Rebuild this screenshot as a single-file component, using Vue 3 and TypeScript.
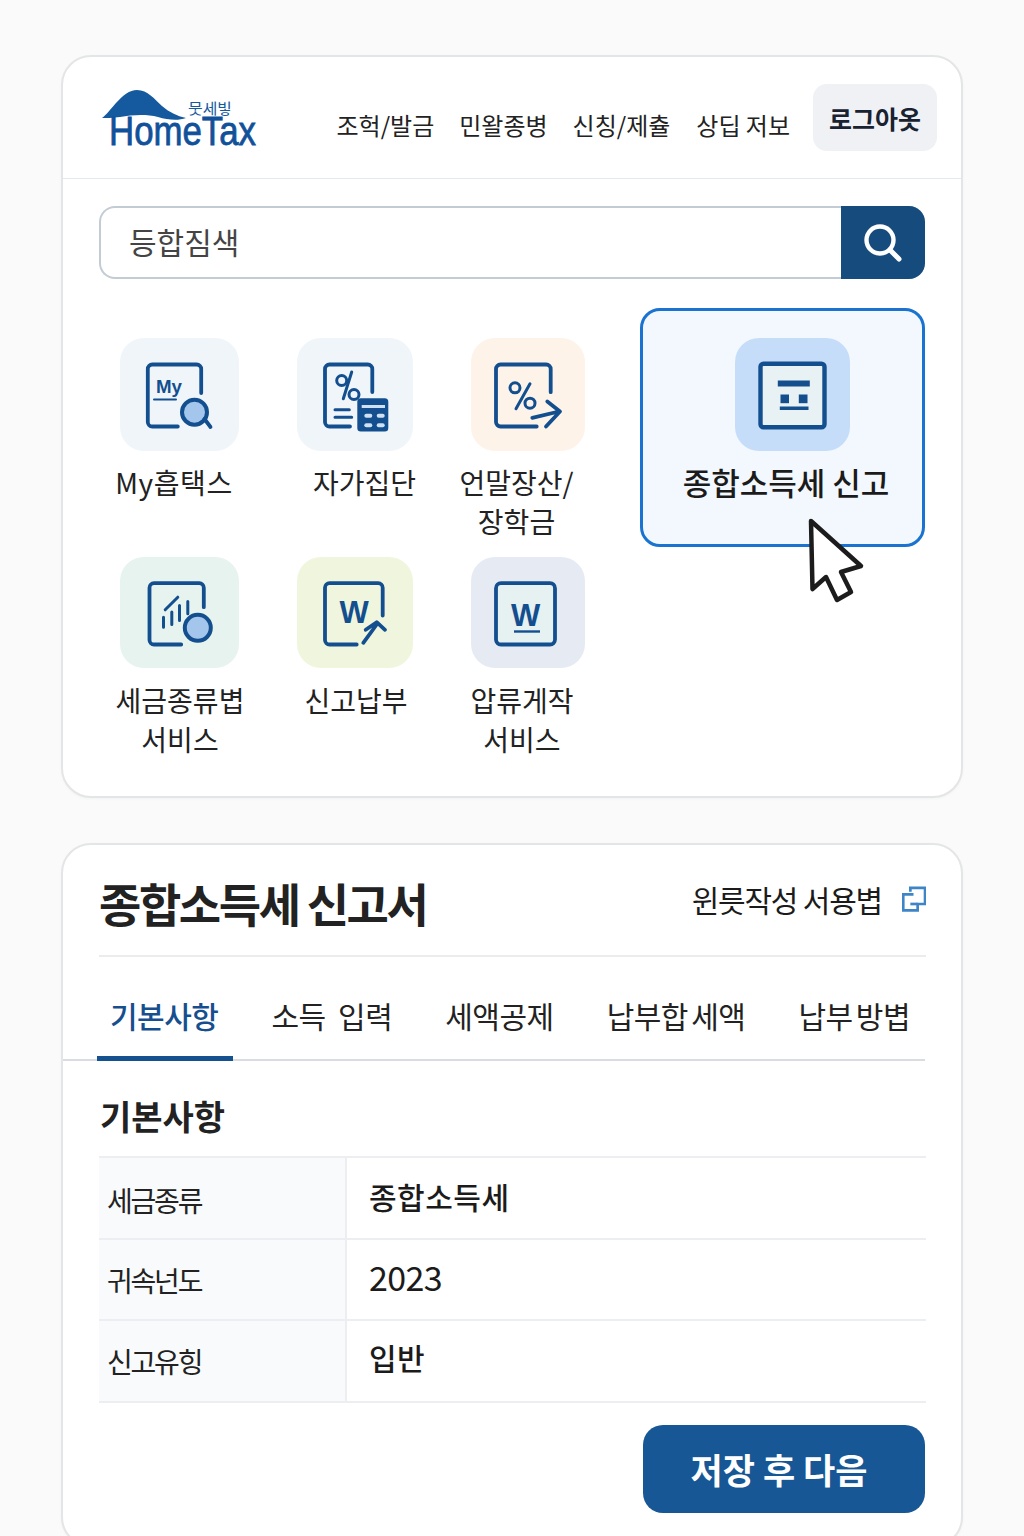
<template>
  <div class="page">
    <section class="card top-card">
      <header class="top-bar">
        <svg class="logo" viewBox="0 0 156 62" width="156" height="62" role="img" aria-label="HomeTax">
          <path d="M0 28 C9 22 20 0 35 0 C46 0 52 9 60 16 C67 22 75 26 84 28 C76 31 66 30 56 27 C44 24 30 25 18 27 C10 28 4 28 0 28 Z" fill="#155a9f" />
          <text x="86" y="24" font-size="15" textLength="44" lengthAdjust="spacingAndGlyphs" fill="#155a9f" class="logo-small">뭇세빟</text>
          <text x="7" y="55" font-size="40" textLength="147" lengthAdjust="spacingAndGlyphs" fill="#11519a" stroke="#11519a" stroke-width="0.8" class="logo-word">HomeTax</text>
        </svg>
        <nav class="top-nav">
          <a v-for="item in navItems" :key="item">{{ item }}</a>
        </nav>
        <button class="logout">로그아옷</button>
      </header>

      <div class="body">
        <div class="search">
          <div class="search-text">등합짐색</div>
          <div class="search-btn">
            <svg viewBox="0 0 40 40" width="40" height="40" fill="none" stroke="#fff">
              <circle cx="17" cy="17" r="13.5" stroke-width="4.4" />
              <path d="M27 27 L36 36" stroke-width="5" stroke-linecap="round" />
            </svg>
          </div>
        </div>

        <div class="menu-wrap">
          <div class="menu-grid">
            <div class="menu-item">
              <div class="menu-icon c1 bg-blue">
                <svg viewBox="0 0 76 76" width="76" height="76" class="ico">
                  <path d="M60.2 36 V12 a4.5 4.5 0 0 0 -4.5 -4.5 H11.3 a4.5 4.5 0 0 0 -4.5 4.5 V65 a4.5 4.5 0 0 0 4.5 4.5 H36.8" />
                  <text x="15" y="36" font-size="19" class="ico-text" textLength="26" lengthAdjust="spacingAndGlyphs">My</text>
                  <path d="M13 42.5 H35" stroke-width="2" />
                  <circle cx="53.5" cy="55.2" r="12.5" fill="#a5c6ec" stroke-width="4" />
                  <path d="M63.5 62 L69.5 70" />
                </svg>
              </div>
              <div class="menu-label m-my">My흡택스</div>
            </div>

            <div class="menu-item">
              <div class="menu-icon c2 bg-blue">
                <svg viewBox="0 0 76 76" width="76" height="76" class="ico">
                  <path d="M55.3 35 V12 a4.5 4.5 0 0 0 -4.5 -4.5 H12.5 a4.5 4.5 0 0 0 -4.5 4.5 V65 a4.5 4.5 0 0 0 4.5 4.5 H33" />
                  <circle cx="24.7" cy="23.5" r="5" stroke-width="3" />
                  <circle cx="37" cy="37.5" r="5" stroke-width="3" />
                  <path d="M34.7 15 L26.3 41.8" stroke-width="3" />
                  <path d="M18 52.8 H32.3 M18 60.2 H34.7" stroke-width="3" />
                  <rect x="40.3" y="41.2" width="31" height="33.3" rx="3.5" fill="#134f8f" stroke="none" />
                  <rect x="44.7" y="48" width="23.3" height="3" fill="#cfe0f2" stroke="none" />
                  <rect x="47.3" y="56.8" width="8" height="4" rx="2" class="pill" />
                  <rect x="59.7" y="56.8" width="8" height="4" rx="2" class="pill" />
                  <rect x="47.3" y="66.2" width="8" height="4" rx="2" class="pill" />
                  <rect x="59.7" y="66.2" width="8" height="4" rx="2" class="pill" />
                </svg>
              </div>
              <div class="menu-label m-self">자가집단</div>
            </div>

            <div class="menu-item">
              <div class="menu-icon c3 bg-orange">
                <svg viewBox="0 0 76 76" width="76" height="76" class="ico">
                  <path d="M60.7 35.2 V12 a4.5 4.5 0 0 0 -4.5 -4.5 H10.5 a4.5 4.5 0 0 0 -4.5 4.5 V65 a4.5 4.5 0 0 0 4.5 4.5 H46.7" />
                  <circle cx="25" cy="30.8" r="5" stroke-width="3" />
                  <circle cx="40" cy="46.2" r="5" stroke-width="3" />
                  <path d="M40 26.8 L26 51.8" stroke-width="3" />
                  <path d="M42.3 60.8 L69 54.5 M57.3 44.5 L70 54.5 L56 69.5" />
                </svg>
              </div>
              <div class="menu-label m-year">언말장산/<br />장학금</div>
            </div>

            <div class="menu-item">
              <div class="menu-icon c1 bg-green">
                <svg viewBox="0 0 76 76" width="76" height="76" class="ico">
                  <path d="M62.8 32.2 V12.7 a4.5 4.5 0 0 0 -4.5 -4.5 H13 a4.5 4.5 0 0 0 -4.5 4.5 V65 a4.5 4.5 0 0 0 4.5 4.5 H40.2" />
                  <path d="M22.5 42.2 V52.2 M30.8 37 V49.5 M38.5 30.5 V45.5 M46.8 26.5 V38.8 M24.2 34.8 L36.8 22.2" stroke-width="3" />
                  <circle cx="56.8" cy="52.8" r="13" fill="#a5c6ec" stroke-width="4" />
                </svg>
              </div>
              <div class="menu-label m-tax">세금종류볍<br />서비스</div>
            </div>

            <div class="menu-item">
              <div class="menu-icon c2 bg-lime">
                <svg viewBox="0 0 76 76" width="76" height="76" class="ico">
                  <path d="M65.7 40.5 V12.7 a4.5 4.5 0 0 0 -4.5 -4.5 H12.5 a4.5 4.5 0 0 0 -4.5 4.5 V65 a4.5 4.5 0 0 0 4.5 4.5 H39.7" />
                  <text x="22.5" y="48.2" font-size="31" class="ico-text">W</text>
                  <path d="M46.3 67.8 L59.7 49.5 M48.7 54.8 L59.7 47.2 L68 54.8" />
                </svg>
              </div>
              <div class="menu-label m-pay">신고납부</div>
            </div>

            <div class="menu-item">
              <div class="menu-icon c3 bg-slate">
                <svg viewBox="0 0 76 76" width="76" height="76" class="ico">
                  <rect x="6" y="8.2" width="59" height="61.3" rx="5" fill="#e6f1f2" />
                  <text x="21" y="50.5" font-size="31" class="ico-text">W</text>
                  <path d="M24 56.5 H50" stroke-width="2.4" stroke-linecap="butt" />
                </svg>
              </div>
              <div class="menu-label m-seize">압류게작<br />서비스</div>
            </div>
          </div>

          <div class="feature">
            <div class="feature-icon">
              <svg viewBox="0 0 76 76" width="76" height="76" class="ico">
                <rect x="5.5" y="6.8" width="64" height="63.4" rx="3" fill="#e8f2f4" stroke-width="4.4" />
                <g fill="#154e8c" stroke="none">
                  <rect x="22.8" y="23.5" width="32" height="6" />
                  <rect x="25.5" y="37.5" width="8.5" height="8.7" />
                  <rect x="43.8" y="37.5" width="8.7" height="8.7" />
                  <rect x="24.8" y="49.5" width="28.7" height="3.5" />
                </g>
              </svg>
            </div>
            <div class="feature-label">종합소득세 신고</div>
            <svg class="cursor" viewBox="0 0 60 90" width="60" height="90">
              <path d="M4 4 L54 49 L34 55 L44 75 L30 83 L19 60 L5.5 72 Z" fill="#fff" stroke="#1c1c1c" stroke-width="4.5" stroke-linejoin="round" />
            </svg>
          </div>
        </div>
      </div>
    </section>

    <section class="card form-card">
      <div class="form-head">
        <h1>종합소득세 신고서</h1>
        <a class="guide">
          <span>윈릇작성 서용볍</span>
          <svg viewBox="0 0 25 27" width="24" height="26" fill="none" stroke="#3d85c6" stroke-width="2.8">
            <path d="M8.7 6 V2 H24 V18.7 H16.3 V25.3 H1.3 V8.7 H12" />
            <path d="M8.7 18.7 H16.3" />
          </svg>
        </a>
      </div>

      <div class="tabs">
        <button
          v-for="(tab, i) in tabs"
          :key="tab"
          class="tab"
          :class="{ active: i === activeTab }"
          @click="activeTab = i"
        >{{ tab }}</button>
      </div>

      <h2>기본사항</h2>
      <div class="info-table">
        <div class="info-row" v-for="row in rows" :key="row.label">
          <div class="info-label">{{ row.label }}</div>
          <div class="info-value" :class="row.cls">{{ row.value }}</div>
        </div>
      </div>

      <div class="actions">
        <button class="save">저장 후 다음</button>
      </div>
    </section>
  </div>
</template>

<script setup lang="ts">
import { ref } from 'vue'

const navItems = ['조헉/발금', '민왈종병', '신칭/제츌', '상딥 저보']
const tabs = ['기본사항', '소득  입력', '세액공제', '납부합 세액', '납부 방볍']
const activeTab = ref(0)

const rows = [
  { label: '세금종류', value: '종합소득세', cls: 'strong' },
  { label: '귀속넌도', value: '2023', cls: 'num' },
  { label: '신고유힝', value: '입반', cls: 'strong' },
]
</script>

<style>
html, body {
  margin: 0;
  background: #fafafa;
}
</style>

<style scoped>
* {
  box-sizing: border-box;
}

.page {
  padding: 55px 61px 0;
  display: flex;
  flex-direction: column;
  gap: 45px;
  font-family: "Noto Sans CJK KR", "Noto Sans", sans-serif;
  color: #1b1b1b;
}

.card {
  background: #fff;
  border: 2px solid #e4e5e6;
  border-radius: 30px;
  box-shadow: 0 1px 3px rgba(0, 0, 0, 0.03);
}

.top-card {
  height: 743px;
}

.top-bar {
  height: 122px;
  padding: 27px 24px 0 39px;
  display: flex;
  align-items: flex-start;
  border-bottom: 1px solid #e4e9ee;
}

.logo {
  margin-top: 6px;
  overflow: visible;
}

.logo-word {
  font-family: "Liberation Sans", sans-serif;
}

.logo-small {
  font-family: "Noto Sans CJK KR", sans-serif;
}

.top-nav {
  margin-left: auto;
  margin-top: 24px;
  display: flex;
  gap: 25px;
  font-size: 24px;
  line-height: 34px;
  white-space: nowrap;
  color: #222;
}

.top-nav a:last-child {
  margin-left: 1px;
}

.logout {
  margin-left: 23px;
  width: 124px;
  height: 67px;
  border: none;
  border-radius: 14px;
  background: #eff1f5;
  font: 700 25px "Noto Sans CJK KR", sans-serif;
  color: #182230;
  padding: 0;
}

.body {
  padding: 27px 36px 0;
}

.search {
  height: 73px;
  display: flex;
  border: 2px solid #c3ccd4;
  border-right: none;
  border-radius: 16px;
}

.search-text {
  flex: 1;
  padding-left: 28px;
  font-size: 30px;
  line-height: 66px;
  color: #444;
}

.search-btn {
  width: 84px;
  margin: -2px 0;
  background: #164b7e;
  border-radius: 0 16px 16px 0;
  display: flex;
  align-items: center;
  justify-content: center;
}

.menu-wrap {
  display: flex;
  justify-content: space-between;
  align-items: flex-start;
  padding-top: 29px;
}

.menu-grid {
  padding-top: 30px;
  display: grid;
  grid-template-columns: 160px 192px 154px;
  grid-auto-rows: 219px;
}

.menu-item {
  display: flex;
  flex-direction: column;
  align-items: center;
}

.menu-icon {
  height: 113px;
  border-radius: 24px;
  display: flex;
  align-items: center;
  justify-content: center;
}

.menu-item:nth-child(n + 4) .menu-icon {
  height: 111px;
}

.c1 { width: 119px; }
.c2 { width: 116px; }
.c3 { width: 114px; }

.bg-blue { background: #f0f5fa; }
.bg-orange { background: #fef3e8; }
.bg-green { background: #e7f3ee; }
.bg-lime { background: #f0f6de; }
.bg-slate { background: #e6ebf3; }

.menu-label {
  margin-top: 12px;
  font-size: 28px;
  line-height: 39px;
  text-align: center;
  white-space: nowrap;
  color: #222;
}

.menu-item:nth-child(n + 4) .menu-label {
  margin-top: 13px;
}

.m-my { margin-right: 10px; letter-spacing: 0.6px; }
.m-self { margin-left: 19px; }
.m-year { margin-right: 23px; }
.m-tax { margin-left: 2px; }
.m-pay { margin-left: 2px; }
.m-seize { margin-right: 12px; }

.ico {
  fill: none;
  stroke: #134f8f;
  stroke-width: 3.8;
  stroke-linecap: round;
  stroke-linejoin: round;
}

.ico-text {
  font-family: "Liberation Sans", sans-serif;
  font-weight: 700;
  fill: #134f8f;
  stroke: none;
}

.pill {
  fill: #cfe0f2;
  stroke: none;
}

.feature {
  position: relative;
  width: 285px;
  height: 239px;
  background: #f3f8fe;
  border: 3px solid #1a73d0;
  border-radius: 20px;
  display: flex;
  flex-direction: column;
  align-items: center;
  padding-top: 27px;
}

.feature-icon {
  width: 115px;
  height: 113px;
  margin-left: 20px;
  background: #c6ddf9;
  border-radius: 24px;
  display: flex;
  align-items: center;
  justify-content: center;
}

.feature-label {
  margin-top: 11px;
  margin-left: 7px;
  font-size: 31px;
  line-height: 39px;
  font-weight: 500;
  white-space: nowrap;
  color: #1b1b1b;
}

.cursor {
  position: absolute;
  left: 164px;
  top: 206px;
}

.form-card {
  height: 704px;
  padding: 0 35px 0 0;
}

.form-head {
  margin-left: 36px;
  height: 112px;
  display: flex;
  align-items: center;
  justify-content: space-between;
  border-bottom: 2px solid #ececec;
}

h1 {
  margin: 4px 0 0;
  font-size: 46px;
  font-weight: 700;
  letter-spacing: -2.4px;
  line-height: 60px;
  color: #222;
}

.guide {
  display: flex;
  align-items: center;
  gap: 20px;
  font-size: 30px;
  letter-spacing: -1.2px;
  margin-bottom: 2px;
  color: #1b1b1b;
}

.tabs {
  padding-left: 34px;
  display: flex;
  gap: 25px;
  border-bottom: 2px solid #d9dde1;
  height: 104px;
  margin-right: 1px;
}

.tab {
  height: 104px;
  padding: 17px 15px 0 13px;
  background: none;
  border: none;
  border-bottom: 5px solid transparent;
  font: 400 30px/36px "Noto Sans CJK KR", sans-serif;
  letter-spacing: -0.5px;
  color: #222;
  white-space: pre;
}

.tab:nth-child(n + 4) {
  word-spacing: -3px;
}

.tab.active {
  color: #174f8e;
  font-weight: 500;
  border-bottom-color: #15508f;
}

h2 {
  margin: 33px 0 18px 37px;
  font-size: 34px;
  font-weight: 700;
  line-height: 44px;
  color: #222;
}

.info-table {
  margin-left: 36px;
  border-top: 2px solid #eceef1;
}

.info-row {
  display: flex;
  height: 81.5px;
  border-bottom: 2px solid #eceef1;
}

.info-label {
  width: 248px;
  padding-left: 8px;
  background: #f9fafc;
  border-right: 2px solid #eceef1;
  font-size: 28px;
  letter-spacing: -2.2px;
  line-height: 84px;
  color: #222;
}

.info-row:nth-child(n + 2) .info-label {
  line-height: 81px;
}

.info-value {
  padding-left: 22px;
  font-size: 30px;
  line-height: 76px;
  letter-spacing: 0.5px;
  color: #1b1b1b;
}

.info-row:nth-child(n + 2) .info-value {
  line-height: 73px;
}

.info-value.strong {
  font-weight: 500;
}

.info-value.num {
  font-size: 34px;
  letter-spacing: -0.6px;
}

.actions {
  display: flex;
  justify-content: flex-end;
  margin-top: 22px;
  margin-right: 1px;
}

.save {
  width: 282px;
  height: 88px;
  border: none;
  border-radius: 20px;
  background: #175796;
  font: 700 35px "Noto Sans CJK KR", sans-serif;
  color: #fff;
  padding: 0 10px 0 0;
}
</style>
